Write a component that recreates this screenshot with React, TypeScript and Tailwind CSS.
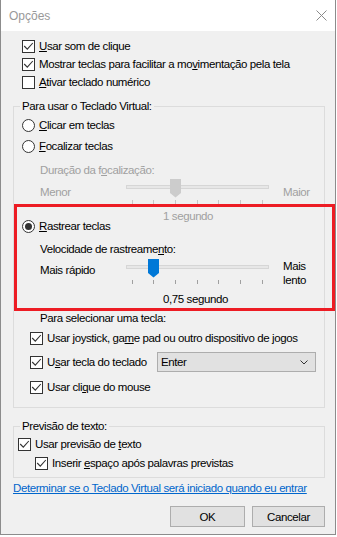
import React from 'react';

// Windows 10 "Opções" dialog of the On-Screen Keyboard

function Key({ children }: { children: React.ReactNode }) {
  return <u className="underline underline-offset-[1px] decoration-1">{children}</u>;
}

function CheckBox({ checked }: { checked: boolean }) {
  return (
    <span className="w-[13px] h-[13px] shrink-0 border border-[#333] bg-white flex items-center justify-center">
      {checked && (
        <svg width="11" height="11" viewBox="0 0 11 11">
          <path d="M1.2 5 L4.3 8.2 L9.8 2" fill="none" stroke="#333" strokeWidth="1.1" />
        </svg>
      )}
    </span>
  );
}

function Radio({ checked }: { checked: boolean }) {
  return (
    <span className="w-[13px] h-[13px] shrink-0 rounded-full border border-[#333] bg-white flex items-center justify-center">
      {checked && <span className="w-[7px] h-[7px] rounded-full bg-[#333]" />}
    </span>
  );
}

function CheckRow({ checked, children, className = '' }: { checked: boolean; children: React.ReactNode; className?: string }) {
  return (
    <div className={`h-[18px] flex items-center gap-[4px] ${className}`}>
      <CheckBox checked={checked} />
      <span className="whitespace-nowrap">{children}</span>
    </div>
  );
}

const TICKS = [6, 27, 49, 71, 92, 114, 136];

function SliderTrack({ tick, disabled }: { tick: number; disabled?: boolean }) {
  const cx = TICKS[tick];
  const thumb = disabled ? '#cccccc' : '#0078d7';
  const tickColor = disabled ? '#c6c6c6' : '#a0a0a0';
  return (
    <svg width="143" height="26" viewBox="0 0 143 26" className="shrink-0">
      <rect x="0.5" y="7.5" width="142" height="3" fill="#e7e7e7" stroke="#d6d6d6" />
      {TICKS.map((t) => (
        <line key={t} x1={t + 0.5} y1="22" x2={t + 0.5} y2="26" stroke={tickColor} />
      ))}
      <path d={`M${cx - 5} 1 H${cx + 6} V15 L${cx + 0.5} 19.5 L${cx - 5} 15 Z`} fill={thumb} />
    </svg>
  );
}

export default function App() {
  return (
    <div className="w-[337px] h-[537px] bg-white font-['Liberation_Sans',Arial,sans-serif] text-[11.5px] leading-[14px] tracking-[-0.4px] text-black">
      <div className="relative w-[336px] h-[535px] border-x border-b border-[#8c8c8c] flex flex-col">
        {/* Title bar */}
        <div className="h-[31px] bg-white flex items-center justify-between pl-[8px] pr-[8px]">
          <span className="text-[12px] tracking-normal text-[#999]">Opções</span>
          <svg width="11" height="11" viewBox="0 0 11 11">
            <path d="M0.5 0.5 L10.5 10.5 M10.5 0.5 L0.5 10.5" stroke="#8a8a8a" strokeWidth="1" />
          </svg>
        </div>

        {/* Body */}
        <div className="flex-1 bg-[#f0f0f0] flex flex-col pt-[6px]">
          <CheckRow checked className="ml-[21px]"><Key>U</Key>sar som de clique</CheckRow>
          <CheckRow checked className="ml-[21px]">Mostrar teclas para facilitar a mo<Key>v</Key>imentação pela tela</CheckRow>
          <CheckRow checked={false} className="ml-[21px]"><Key>A</Key>tivar teclado numérico</CheckRow>

          <fieldset className="mt-[8px] ml-[12px] w-[312px] border border-[#dcdcdc] pl-[6px] pb-[11px]">
            <legend className="px-[2px] leading-[14px]">Para usar o Teclado Virtual:</legend>

            <div className="mt-[3px] ml-[2px] h-[18px] flex items-center gap-[4px]">
              <Radio checked={false} />
              <span><Key>C</Key>licar em teclas</span>
            </div>
            <div className="mt-[3px] ml-[2px] h-[18px] flex items-center gap-[4px]">
              <Radio checked={false} />
              <span><Key>F</Key>ocalizar teclas</span>
            </div>

            <div className="mt-[7px] ml-[20px] h-[16px] flex items-center text-[#a0a0a0]">
              Duração da f<Key>o</Key>calização:
            </div>
            <div className="ml-[20px] h-[26px] flex items-start text-[#a0a0a0]">
              <span className="w-[86px] mt-[7px]">Menor</span>
              <SliderTrack tick={2} disabled />
              <span className="ml-[14px] mt-[7px]">Maior</span>
            </div>
            <div className="mt-[5px] ml-[143px] h-[14px] text-[#a0a0a0]">1 segundo</div>

            <div className="-mt-[6px] ml-[2px] h-[18px] flex items-center gap-[4px]">
              <Radio checked />
              <span><Key>R</Key>astrear teclas</span>
            </div>
            <div className="mt-[6px] ml-[20px] h-[16px] flex items-center">
              Velocidade de rastreame<Key>n</Key>to:
            </div>
            <div className="mt-[1px] ml-[20px] h-[26px] flex items-start">
              <span className="w-[86px] mt-[5px]">Mais rápido</span>
              <SliderTrack tick={1} />
              <span className="ml-[14px] mt-[1px] flex flex-col">
                <span>Mais</span>
                <span>lento</span>
              </span>
            </div>
            <div className="mt-[8px] ml-[143px] h-[14px]">0,75 segundo</div>

            <div className="mt-[5px] ml-[20px] h-[14px]">Para selecionar uma tecla:</div>
            <CheckRow checked className="mt-[4px] ml-[10px]">Usar joystick, ga<Key>m</Key>e pad ou outro dispositivo de jogos</CheckRow>
            <div className="mt-[5px] ml-[10px] h-[20px] flex items-center">
              <div className="w-[127px] flex items-center gap-[4px]">
                <CheckBox checked />
                <span className="whitespace-nowrap">U<Key>s</Key>ar tecla do teclado</span>
              </div>
              <div className="w-[159px] h-[20px] border border-[#adadad] bg-[#e1e1e1] flex items-center justify-between pl-[3px] pr-[7px]">
                <span>Enter</span>
                <svg width="8" height="5" viewBox="0 0 8 5">
                  <path d="M0.5 0.5 L4 4 L7.5 0.5" fill="none" stroke="#333" />
                </svg>
              </div>
            </div>
            <CheckRow checked className="mt-[6px] ml-[10px]">Usar cli<Key>q</Key>ue do mouse</CheckRow>
          </fieldset>

          <fieldset className="mt-[11px] ml-[12px] w-[312px] border border-[#dcdcdc] pl-[6px] pb-[5px]">
            <legend className="px-[2px] leading-[14px]">Previsão de texto:</legend>
            <CheckRow checked className="mt-[2px] -ml-[2px]">Usar previsão de <Key>t</Key>exto</CheckRow>
            <CheckRow checked className="mt-[1px] ml-[15px]">Inserir <Key>e</Key>spaço após palavras previstas</CheckRow>
          </fieldset>

          <a className="mt-[3px] ml-[12px] h-[14px] text-[#0066cc] underline underline-offset-[1px] whitespace-nowrap self-start">
            Determinar se o Teclado Virtual será iniciado quando eu entrar
          </a>

          <div className="mt-[11px] pr-[10px] flex justify-end gap-[7px]">
            <button className="w-[75px] h-[21px] border border-[#adadad] bg-[#e1e1e1] text-center">OK</button>
            <button className="w-[73px] h-[21px] border border-[#adadad] bg-[#e1e1e1] text-center">Cancelar</button>
          </div>
        </div>

        {/* red highlight annotation */}
        <div className="absolute left-[13px] top-[204px] w-[321px] h-[107px] border-[3px] border-[#ed1c24] pointer-events-none" />
      </div>
    </div>
  );
}
